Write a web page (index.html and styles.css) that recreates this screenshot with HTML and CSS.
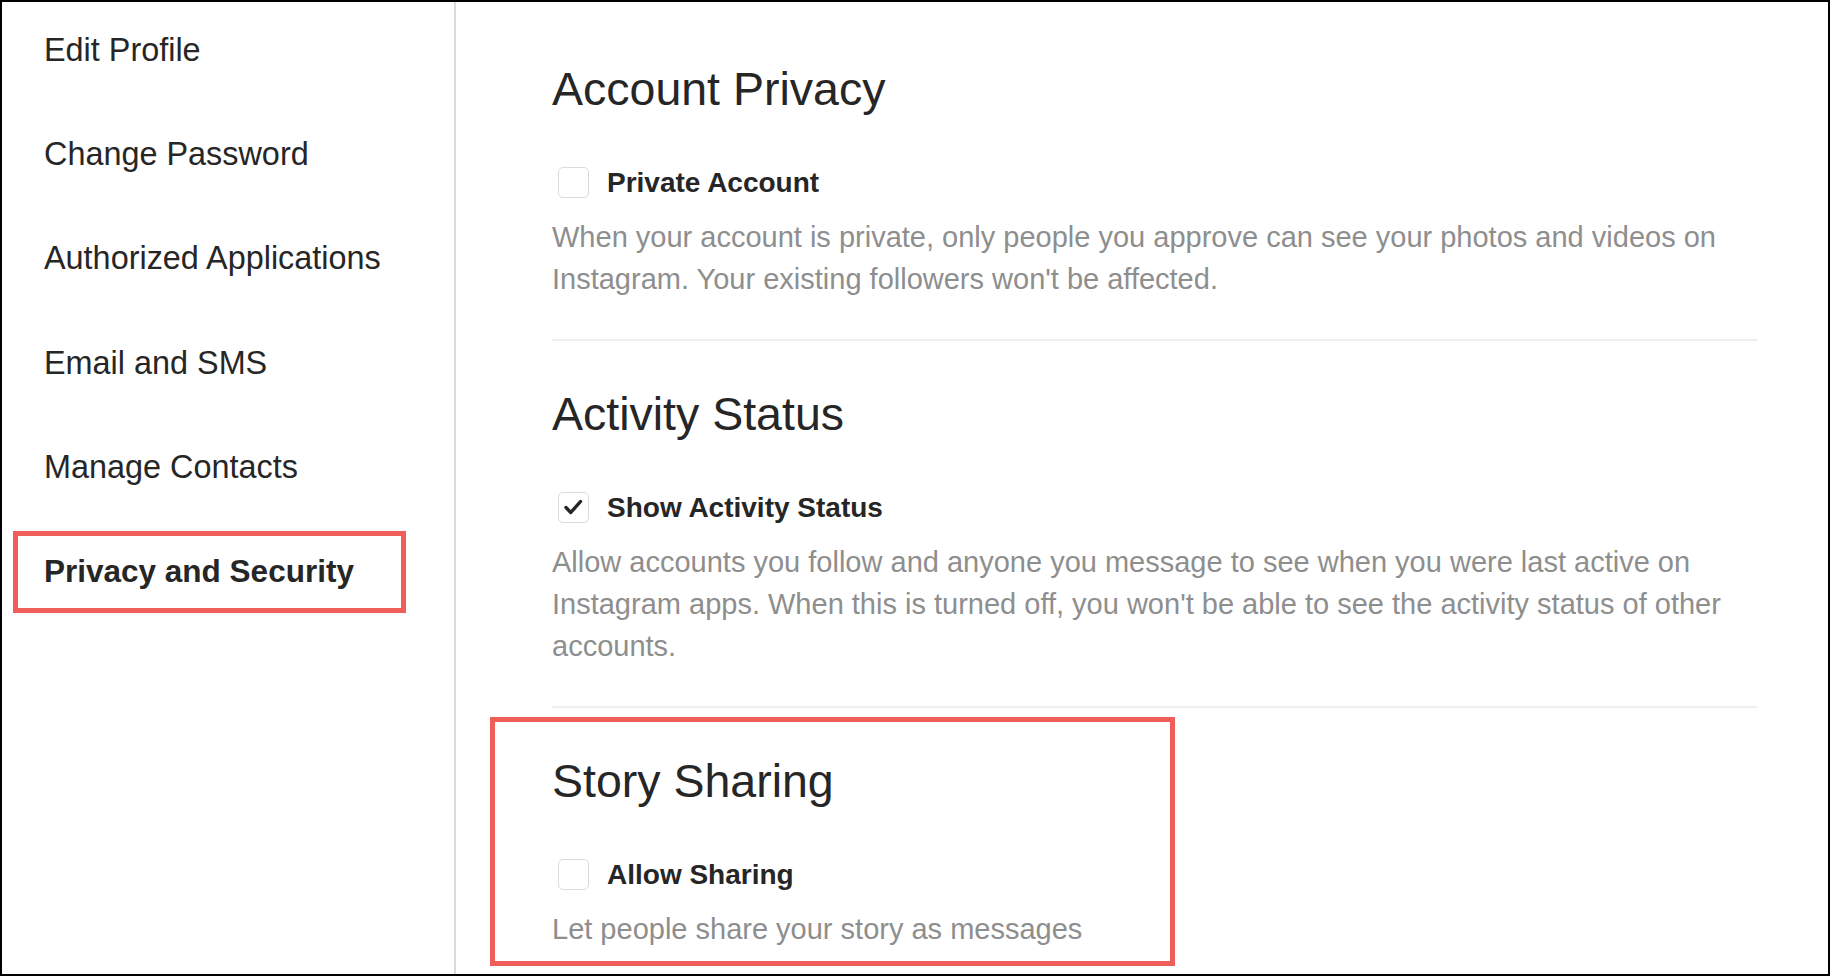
FILE: index.html
```html
<!DOCTYPE html>
<html lang="en">
<head>
<meta charset="utf-8">
<title>Privacy and Security</title>
<link rel="stylesheet" href="styles.css">
</head>
<body>
<div class="frame">
  <nav class="sidebar">
    <a class="nav-item">Edit Profile</a>
    <a class="nav-item">Change Password</a>
    <a class="nav-item">Authorized Applications</a>
    <a class="nav-item">Email and SMS</a>
    <a class="nav-item">Manage Contacts</a>
    <a class="nav-item active">Privacy and Security</a>
  </nav>
  <main class="content">
    <section class="section">
      <h2 class="section-title">Account Privacy</h2>
      <label class="option">
        <span class="checkbox"></span>
        <span class="option-label">Private Account</span>
      </label>
      <p class="help">When your account is private, only people you approve can see your photos and videos on Instagram. Your existing followers won't be affected.</p>
    </section>
    <hr class="divider">
    <section class="section">
      <h2 class="section-title">Activity Status</h2>
      <label class="option">
        <span class="checkbox">
          <svg class="check" viewBox="0 0 31 31" width="31" height="31"><path d="M8 15.5 L12.8 20.5 L22.5 9.5" fill="none" stroke="#262626" stroke-width="3.4" stroke-linecap="round" stroke-linejoin="round"/></svg>
        </span>
        <span class="option-label">Show Activity Status</span>
      </label>
      <p class="help">Allow accounts you follow and anyone you message to see when you were last active on Instagram apps. When this is turned off, you won't be able to see the activity status of other accounts.</p>
    </section>
    <hr class="divider">
    <section class="section highlight">
      <h2 class="section-title">Story Sharing</h2>
      <label class="option">
        <span class="checkbox"></span>
        <span class="option-label">Allow Sharing</span>
      </label>
      <p class="help">Let people share your story as messages</p>
    </section>
  </main>
</div>
</body>
</html>
```
FILE: styles.css
```css
* { box-sizing: border-box; }

html, body {
  margin: 0;
  padding: 0;
  background: #ffffff;
}

body {
  font-family: "Liberation Sans", Arial, sans-serif;
  color: #262626;
}

.frame {
  width: 1830px;
  height: 976px;
  border: 2px solid #000000;
  display: flex;
  overflow: hidden;
  background: #ffffff;
}

.sidebar {
  width: 454px;
  flex: 0 0 454px;
  border-right: 2px solid #dbdbdb;
  padding-top: 7px;
  display: flex;
  flex-direction: column;
  gap: 22.4px;
}

.nav-item {
  display: flex;
  align-items: center;
  height: 82px;
  width: 393px;
  margin-left: 11px;
  padding-left: 26px;
  border: 5px solid transparent;
  font-size: 32.4px;
  color: #262626;
  text-decoration: none;
}

.nav-item.active {
  border-color: #ef5e58;
  font-weight: 700;
  font-size: 31.5px;
}

.content {
  flex: 1;
  padding-left: 96px;
  padding-top: 60px;
}

.section {
  width: 1205px;
}

.section-title {
  margin: 0 0 51px 0;
  font-size: 46.5px;
  line-height: 54px;
  font-weight: 400;
  color: #262626;
}

.option {
  display: flex;
  align-items: center;
  height: 31px;
  gap: 18px;
  margin-left: 6px;
}

.checkbox {
  width: 31px;
  height: 31px;
  flex: 0 0 31px;
  border: 1.5px solid #dbdbdb;
  border-radius: 5px;
  background: #ffffff;
  position: relative;
}

.check {
  position: absolute;
  left: -1.5px;
  top: -1.5px;
}

.option-label {
  font-size: 28px;
  line-height: 31px;
  font-weight: 700;
  color: #262626;
}

.help {
  margin: 18px 0 0 0;
  font-size: 29px;
  line-height: 42px;
  color: #8e8e8e;
}

.divider {
  width: 1205px;
  height: 2px;
  border: 0;
  background: #efefef;
  margin: 39px 0 46px 0;
}

.section.highlight {
  width: 685px;
  margin-left: -62px;
  margin-top: -37px;
  padding: 32px 0 11px 57px;
  border: 5px solid #ef5e58;
}
```
